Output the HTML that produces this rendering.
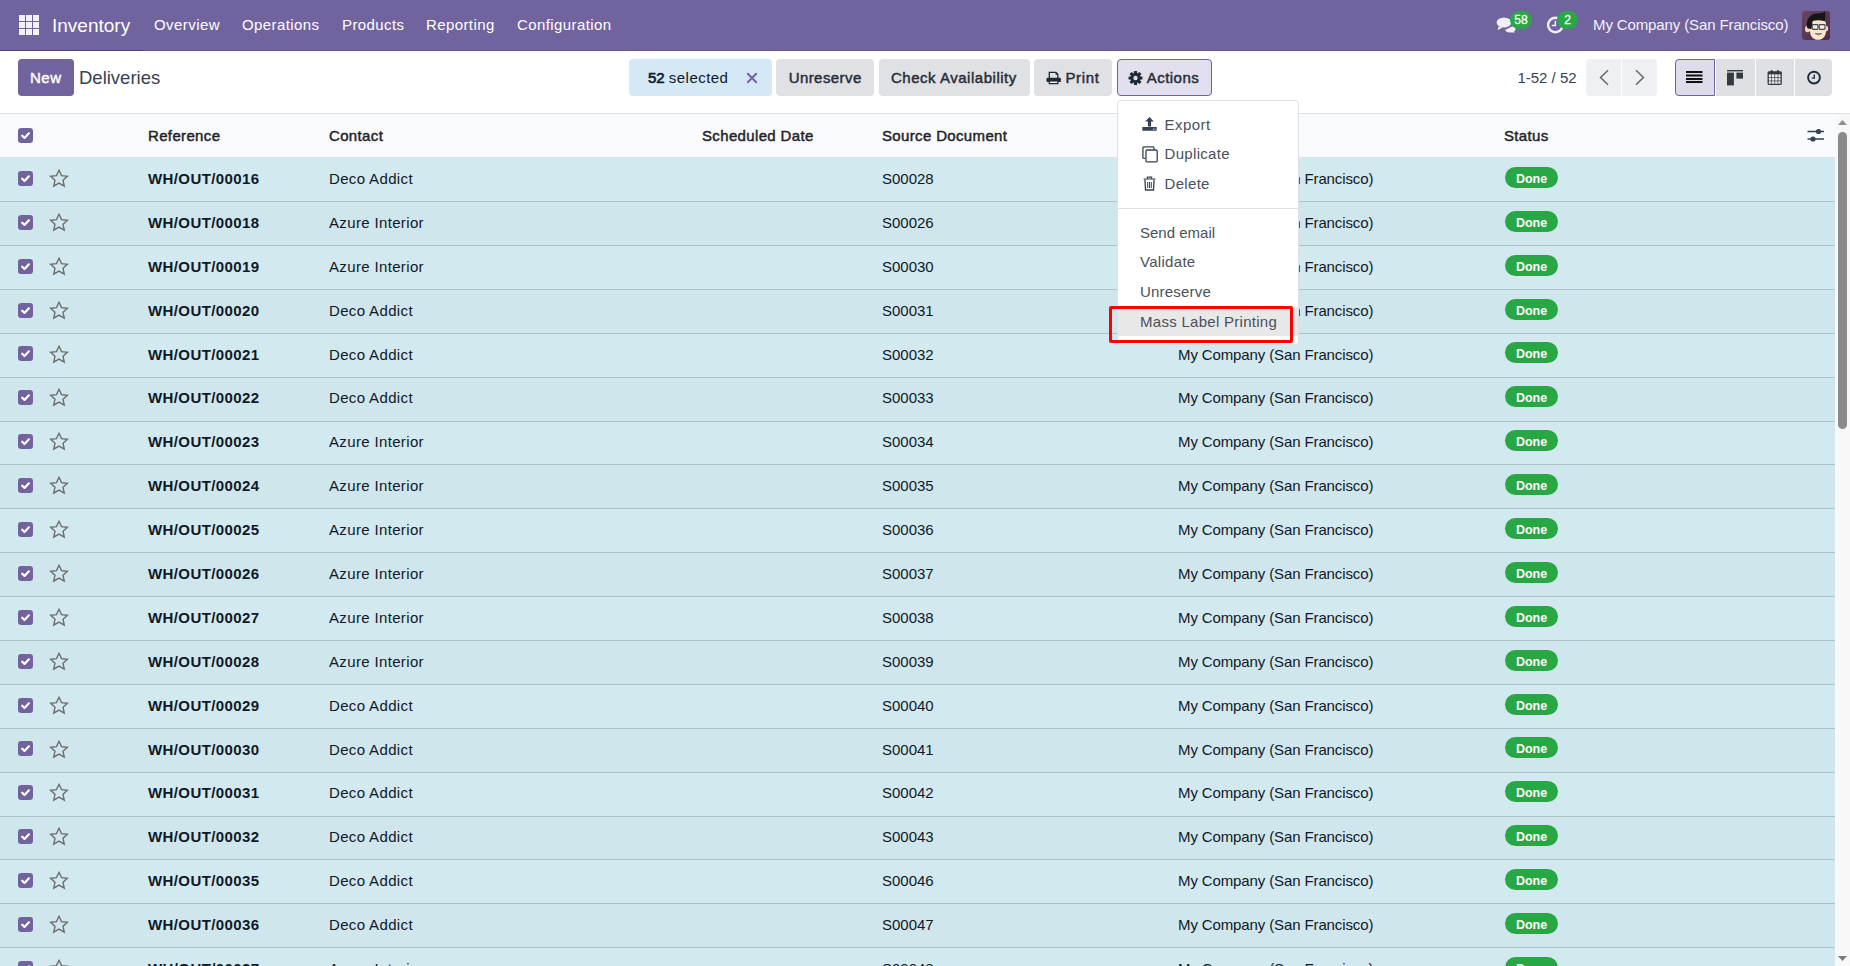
<!DOCTYPE html>
<html><head><meta charset="utf-8"><title>Deliveries</title>
<style>
*{box-sizing:border-box;margin:0;padding:0}
html,body{width:1850px;height:966px;overflow:hidden;background:#fff;font-family:"Liberation Sans",sans-serif;color:#374151}
.abs{position:absolute}
.t,.nt,.bt,.dt{position:absolute;line-height:0;white-space:nowrap;margin-top:-0.3465em}
.t{font-size:15px;color:#111827}
.b{font-weight:bold}
.hd{color:#1f2329;letter-spacing:.35px;-webkit-text-stroke:.45px #1f2329}
#nav{position:absolute;left:0;top:0;width:1850px;height:51px;background:#71639e;border-bottom:1px solid #65588f}
#nav .brandline{position:absolute;left:0;top:50px;width:143px;height:1px;background:#4f4472}
.nt{color:#fff}
.grid{position:absolute;left:19px;top:15px;width:19.5px;height:19.5px}
.grid i{position:absolute;width:6px;height:6px;background:#f3f2f8}
#cp{position:absolute;left:0;top:51px;width:1850px;height:63px;background:#fff;border-bottom:1px solid #dee2e6}
.btn{position:absolute;top:59px;height:37px;border-radius:4px;background:#dfe1e5}
.bt{font-size:15px;font-weight:normal;color:#262c36;-webkit-text-stroke:.45px currentColor}
#thead{position:absolute;left:0;top:114px;width:1835px;height:44px;background:#f9fafb;border-bottom:1px solid #dee2e6}
.row{position:absolute;left:0;width:1835px;height:43.89px;background:#d2e9ef}
.row.odd{background:#cfe7ec}
.rb{position:absolute;left:0;width:1835px;height:1px;background:#a9c3c9}
.cb{position:absolute;left:18px;width:15px;height:15px}
.cb svg,.star svg{display:block}
.star{position:absolute;left:49px;width:20px;height:19px}
.badge{position:absolute;left:1505px;width:53px;height:21px;border-radius:11px;background:#28a745;color:#fff;font-size:12.5px;font-weight:bold;text-align:center;line-height:24px}
#scroll{position:absolute;left:1835px;top:114px;width:15px;height:852px;background:#f8f8f8}
#dd{position:absolute;left:1117px;top:100px;width:182px;height:245px;background:#fff;border:1px solid #dee2e6;border-radius:4px}
.dt{font-size:15px;color:#4a5059}
</style></head><body>
<div id="nav">
  <div class="brandline"></div>
  <div class="grid"><i style="left:0.00px;top:0.00px"></i><i style="left:6.75px;top:0.00px"></i><i style="left:13.50px;top:0.00px"></i><i style="left:0.00px;top:6.75px"></i><i style="left:6.75px;top:6.75px"></i><i style="left:13.50px;top:6.75px"></i><i style="left:0.00px;top:13.50px"></i><i style="left:6.75px;top:13.50px"></i><i style="left:13.50px;top:13.50px"></i></div>
  <div class="nt" style="left:52px;top:33px;font-size:19px">Inventory</div>
  <div class="nt" style="left:154px;top:30px;font-size:15px;letter-spacing:.45px">Overview</div>
  <div class="nt" style="left:242px;top:30px;font-size:15px;letter-spacing:.4px">Operations</div>
  <div class="nt" style="left:342px;top:30px;font-size:15px;letter-spacing:.4px">Products</div>
  <div class="nt" style="left:426px;top:30px;font-size:15px;letter-spacing:.4px">Reporting</div>
  <div class="nt" style="left:517px;top:30px;font-size:15px;letter-spacing:.4px">Configuration</div>
  <div class="nt" style="left:1593px;top:30.4px;font-size:15px;letter-spacing:-.12px;color:#f4f2f8">My Company (San Francisco)</div>
</div>

<svg class="abs" style="left:1494px;top:14px" width="26" height="22" viewBox="0 0 26 22">
 <path d="M10.5 16.2 C11.4 17.9 13.6 19.1 16.3 19.1 C17 19.1 17.6 19 18.2 18.9 L21.8 20.4 L20.6 18 C21.6 17.2 22.2 16.3 22.2 15.2 C22.2 13.7 21.2 12.5 19.6 11.7" fill="#f1eff6" stroke="#71639e" stroke-width="1.3"/>
 <ellipse cx="10" cy="8.5" rx="8" ry="5.6" fill="#f1eff6" stroke="#71639e" stroke-width="1.2"/>
 <path d="M4.6 12.4 L3.6 16.3 L8.6 13.6 Z" fill="#f1eff6"/>
</svg>
<div class="abs" style="left:1510px;top:10.8px;width:22px;height:18px;border-radius:9px;background:#28a745;color:#fff;font-size:12px;text-align:center;line-height:19px;-webkit-text-stroke:.3px #fff">58</div>
<svg class="abs" style="left:1545px;top:15px" width="20" height="20" viewBox="0 0 20 20">
 <circle cx="10.4" cy="10" r="7.3" fill="none" stroke="#f1eff6" stroke-width="2.4"/>
 <path d="M10.4 5.8 V10.4 H6.8" fill="none" stroke="#f1eff6" stroke-width="1.5"/>
</svg>
<div class="abs" style="left:1557.3px;top:10.5px;width:20.5px;height:18.5px;border-radius:9.5px;background:#28a745;color:#fff;font-size:12px;text-align:center;line-height:19px;-webkit-text-stroke:.3px #fff">2</div>
<svg class="abs" style="left:1802px;top:11px" width="28" height="29" viewBox="0 0 28 29">
 <defs><linearGradient id="avg" x1="0" y1="0" x2="1" y2="1"><stop offset="0" stop-color="#6b4562"/><stop offset="1" stop-color="#4a2b43"/></linearGradient></defs>
 <rect x="0" y="0" width="28" height="29" rx="3" fill="url(#avg)"/>
 <ellipse cx="5.6" cy="18" rx="2.6" ry="3.3" fill="#f6d9c2"/>
 <ellipse cx="24.4" cy="17.5" rx="1.8" ry="2.8" fill="#f3d3bb"/>
 <path d="M7.5 12 C7.5 9 11 8 16 8 C21 8 24 10 24 13 L24 20 C24 25.5 20.5 28.8 16 28.8 C11.5 28.8 8 25.5 8 20 Z" fill="#fce4cf"/>
 <path d="M5 16.5 C3.8 7 9 2.5 15 2.5 C19 2.5 21.2 2 22.6 0.6 C23.8 3 23.6 7 22.6 10.2 C19 9 14 9 10.6 10 L9.6 17.8 C8 18.2 6 17.8 5 16.5 Z" fill="#161616"/>
 <rect x="10.2" y="13.6" width="5.8" height="4.8" rx="0.8" fill="#eeeeee" stroke="#4a4a4a" stroke-width="1.2"/>
 <rect x="17.2" y="13.6" width="5.8" height="4.8" rx="0.8" fill="#eeeeee" stroke="#4a4a4a" stroke-width="1.2"/>
 <path d="M13.2 22.6 Q16.5 25.2 19.8 22.6 Z" fill="#e9e9e9" stroke="#7a6a66" stroke-width="0.9"/>
</svg>

<div id="cp"></div>
<div class="btn" style="left:18px;width:56px;background:#71639e"></div>
<div class="bt" style="left:30px;top:83px;color:#fff;letter-spacing:.5px">New</div>
<div class="nt" style="left:79px;top:84px;font-size:18.5px;color:#374151">Deliveries</div>

<div class="btn" style="left:629px;width:143px;background:#d4e8f6"></div>
<div class="bt" style="left:648px;top:83px;color:#111827"><span style="-webkit-text-stroke:.6px currentColor">52</span> <span style="-webkit-text-stroke:0;letter-spacing:.45px">selected</span></div>
<div class="btn" style="left:776px;width:98px"></div><div class="bt" style="left:788.7px;top:83px;letter-spacing:.42px">Unreserve</div>
<div class="btn" style="left:879px;width:151px"></div><div class="bt" style="left:891px;top:83px;letter-spacing:.52px">Check Availability</div>
<div class="btn" style="left:1034px;width:78px"></div><div class="bt" style="left:1065.4px;top:83px;letter-spacing:.7px">Print</div>
<div class="btn" style="left:1117px;width:95px;background:#e2dfee;border:1px solid #71639e"></div><div class="bt" style="left:1146.8px;top:83px;letter-spacing:.45px">Actions</div>

<div class="nt" style="left:1517.4px;top:83px;font-size:15px;color:#374151">1-52 / 52</div>
<div class="btn" style="left:1586px;width:71px;background:#eef0f3"></div>
<div class="abs" style="left:1621px;top:59px;width:1px;height:37px;background:#fff"></div>
<div class="btn" style="left:1675px;width:157px;background:#dee0e4"></div>
<div class="btn" style="left:1675px;width:40px;background:#dedbea;border:1px solid #71639e;border-radius:4px 0 0 4px"></div>
<div class="abs" style="left:1715px;top:59px;width:1px;height:37px;background:#fff"></div>
<div class="abs" style="left:1755px;top:59px;width:1px;height:37px;background:#fff"></div>
<div class="abs" style="left:1794px;top:59px;width:1px;height:37px;background:#fff"></div>

<svg class="abs" style="left:746px;top:71.5px" width="12" height="12" viewBox="0 0 12 12"><path d="M1.3 1.3 L10.7 10.7 M10.7 1.3 L1.3 10.7" stroke="#71639e" stroke-width="2"/></svg>
<svg class="abs" style="left:1045.5px;top:70.5px" width="15" height="14" viewBox="0 0 15 14">
 <path d="M3.3 6.9 V1.45 H10 L11.85 3.3 V6.9" fill="none" stroke="#1f2937" stroke-width="1.3"/>
 <path d="M9.6 1.2 L12.1 3.7 L9.6 3.7 Z" fill="#1f2937"/>
 <rect x="0.5" y="6.7" width="14.4" height="4.4" rx="1.1" fill="#1f2937"/>
 <path d="M3.3 10.6 V12.55 H11.85 V10.6" fill="#fafafa" stroke="#1f2937" stroke-width="1.3"/>
</svg>
<svg class="abs" style="left:1128px;top:70.5px" width="15" height="14" viewBox="-7.5 -7 15 14">
 <g fill="#1f2937">
  <circle r="5"/>
  <rect x="-1.6" y="-7" width="3.2" height="14" rx="0.6"/>
  <rect x="-1.6" y="-7" width="3.2" height="14" rx="0.6" transform="rotate(45)"/>
  <rect x="-1.6" y="-7" width="3.2" height="14" rx="0.6" transform="rotate(90)"/>
  <rect x="-1.6" y="-7" width="3.2" height="14" rx="0.6" transform="rotate(135)"/>
 </g>
 <circle r="2.2" fill="#e2dfee"/>
</svg>
<svg class="abs" style="left:1598px;top:69px" width="12" height="17" viewBox="0 0 12 17"><path d="M10 1.3 L2.6 8.5 L10 15.7" fill="none" stroke="#6b6b6b" stroke-width="1.6"/></svg>
<svg class="abs" style="left:1634px;top:69px" width="12" height="17" viewBox="0 0 12 17"><path d="M2 1.3 L9.4 8.5 L2 15.7" fill="none" stroke="#6b6b6b" stroke-width="1.6"/></svg>
<svg class="abs" style="left:1686px;top:70px" width="17" height="14" viewBox="0 0 17 14"><g fill="#111"><rect x="0" y="1" width="16.5" height="2"/><rect x="0" y="4.5" width="16.5" height="2"/><rect x="0" y="8" width="16.5" height="2"/><rect x="0" y="11" width="16.5" height="2"/></g></svg>
<svg class="abs" style="left:1727px;top:69.5px" width="17" height="16" viewBox="0 0 17 16"><g fill="#343a40"><rect x="0" y="0" width="16" height="1.4"/><rect x="0" y="2.6" width="6.9" height="12.8"/><rect x="9.4" y="2.6" width="6.6" height="6"/></g></svg>
<svg class="abs" style="left:1767px;top:69px" width="16" height="17" viewBox="0 0 16 17">
 <rect x="1.2" y="2.8" width="13" height="12.6" rx="1" fill="#eceef1" stroke="#343a40" stroke-width="1.3"/>
 <rect x="1.2" y="2.8" width="13" height="2.6" fill="#343a40"/>
 <rect x="3.7" y="0.9" width="1.9" height="3.2" rx="0.9" fill="#343a40"/><rect x="9.9" y="0.9" width="1.9" height="3.2" rx="0.9" fill="#343a40"/>
 <path d="M4.45 5.4 V15 M7.7 5.4 V15 M10.95 5.4 V15 M1.5 8.6 H14 M1.5 11.9 H14" stroke="#343a40" stroke-width="0.7"/>
</svg>
<svg class="abs" style="left:1806px;top:70px" width="16" height="16" viewBox="0 0 16 16"><circle cx="8" cy="7.6" r="5.9" fill="none" stroke="#1f2937" stroke-width="1.9"/><path d="M8.3 4.6 V8.2 H5.8" fill="none" stroke="#1f2937" stroke-width="1.3"/></svg>


<div id="thead"></div>
<div class="cb" style="top:128px"><svg width="15" height="15" viewBox="0 0 15 15"><rect x="0" y="0" width="15" height="15" rx="3.2" fill="#71639e"/><path d="M4.2 7.7 L6.5 9.9 L10.9 5.3" fill="none" stroke="#fff" stroke-width="2.2" stroke-linecap="round" stroke-linejoin="round"/></svg></div>
<div class="t hd" style="left:148px;top:140.7px;">Reference</div>
<div class="t hd" style="left:329px;top:140.7px;">Contact</div>
<div class="t hd" style="left:702px;top:140.7px;">Scheduled Date</div>
<div class="t hd" style="left:882px;top:140.7px;">Source Document</div>
<div class="t hd" style="left:1178px;top:140.7px;">Company</div>
<div class="t hd" style="left:1504px;top:140.7px;">Status</div>

<svg class="abs" style="left:1807px;top:128px" width="18" height="15" viewBox="0 0 18 15">
 <path d="M0.5 3.5 H17 M0.5 11 H17" stroke="#374151" stroke-width="1.3"/>
 <circle cx="11.5" cy="3.5" r="2.6" fill="#374151"/><circle cx="6" cy="11" r="2.6" fill="#374151"/>
</svg>


<div class="row" style="top:158.20px"></div><div class="rb" style="top:201px"></div><div class="cb" style="top:170.90px"><svg width="15" height="15" viewBox="0 0 15 15"><rect x="0" y="0" width="15" height="15" rx="3.2" fill="#71639e"/><path d="M4.2 7.7 L6.5 9.9 L10.9 5.3" fill="none" stroke="#fff" stroke-width="2.2" stroke-linecap="round" stroke-linejoin="round"/></svg></div><div class="star" style="top:169.00px"><svg width="20" height="19" viewBox="0 0 20 19"><path d="M10 1.3 L12.55 6.65 L18.4 7.3 L14 11.25 L15.25 17.1 L10 14.1 L4.75 17.1 L6 11.25 L1.6 7.3 L7.45 6.65 Z" fill="none" stroke="#6b6b6b" stroke-width="1.35" stroke-linejoin="miter"/></svg></div><div class="t b" style="left:148px;top:184.20px;letter-spacing:.4px">WH/OUT/00016</div><div class="t" style="left:329px;top:184.20px;letter-spacing:.35px">Deco Addict</div><div class="t" style="left:882px;top:184.20px;">S00028</div><div class="t" style="left:1178px;top:184.20px;letter-spacing:-.12px">My Company (San Francisco)</div><div class="badge" style="top:166.90px">Done</div>
<div class="row odd" style="top:202.09px"></div><div class="rb" style="top:245px"></div><div class="cb" style="top:214.79px"><svg width="15" height="15" viewBox="0 0 15 15"><rect x="0" y="0" width="15" height="15" rx="3.2" fill="#71639e"/><path d="M4.2 7.7 L6.5 9.9 L10.9 5.3" fill="none" stroke="#fff" stroke-width="2.2" stroke-linecap="round" stroke-linejoin="round"/></svg></div><div class="star" style="top:212.89px"><svg width="20" height="19" viewBox="0 0 20 19"><path d="M10 1.3 L12.55 6.65 L18.4 7.3 L14 11.25 L15.25 17.1 L10 14.1 L4.75 17.1 L6 11.25 L1.6 7.3 L7.45 6.65 Z" fill="none" stroke="#6b6b6b" stroke-width="1.35" stroke-linejoin="miter"/></svg></div><div class="t b" style="left:148px;top:228.09px;letter-spacing:.4px">WH/OUT/00018</div><div class="t" style="left:329px;top:228.09px;letter-spacing:.35px">Azure Interior</div><div class="t" style="left:882px;top:228.09px;">S00026</div><div class="t" style="left:1178px;top:228.09px;letter-spacing:-.12px">My Company (San Francisco)</div><div class="badge" style="top:210.79px">Done</div>
<div class="row" style="top:245.98px"></div><div class="rb" style="top:289px"></div><div class="cb" style="top:258.68px"><svg width="15" height="15" viewBox="0 0 15 15"><rect x="0" y="0" width="15" height="15" rx="3.2" fill="#71639e"/><path d="M4.2 7.7 L6.5 9.9 L10.9 5.3" fill="none" stroke="#fff" stroke-width="2.2" stroke-linecap="round" stroke-linejoin="round"/></svg></div><div class="star" style="top:256.78px"><svg width="20" height="19" viewBox="0 0 20 19"><path d="M10 1.3 L12.55 6.65 L18.4 7.3 L14 11.25 L15.25 17.1 L10 14.1 L4.75 17.1 L6 11.25 L1.6 7.3 L7.45 6.65 Z" fill="none" stroke="#6b6b6b" stroke-width="1.35" stroke-linejoin="miter"/></svg></div><div class="t b" style="left:148px;top:271.98px;letter-spacing:.4px">WH/OUT/00019</div><div class="t" style="left:329px;top:271.98px;letter-spacing:.35px">Azure Interior</div><div class="t" style="left:882px;top:271.98px;">S00030</div><div class="t" style="left:1178px;top:271.98px;letter-spacing:-.12px">My Company (San Francisco)</div><div class="badge" style="top:254.68px">Done</div>
<div class="row odd" style="top:289.87px"></div><div class="rb" style="top:333px"></div><div class="cb" style="top:302.57px"><svg width="15" height="15" viewBox="0 0 15 15"><rect x="0" y="0" width="15" height="15" rx="3.2" fill="#71639e"/><path d="M4.2 7.7 L6.5 9.9 L10.9 5.3" fill="none" stroke="#fff" stroke-width="2.2" stroke-linecap="round" stroke-linejoin="round"/></svg></div><div class="star" style="top:300.67px"><svg width="20" height="19" viewBox="0 0 20 19"><path d="M10 1.3 L12.55 6.65 L18.4 7.3 L14 11.25 L15.25 17.1 L10 14.1 L4.75 17.1 L6 11.25 L1.6 7.3 L7.45 6.65 Z" fill="none" stroke="#6b6b6b" stroke-width="1.35" stroke-linejoin="miter"/></svg></div><div class="t b" style="left:148px;top:315.87px;letter-spacing:.4px">WH/OUT/00020</div><div class="t" style="left:329px;top:315.87px;letter-spacing:.35px">Deco Addict</div><div class="t" style="left:882px;top:315.87px;">S00031</div><div class="t" style="left:1178px;top:315.87px;letter-spacing:-.12px">My Company (San Francisco)</div><div class="badge" style="top:298.57px">Done</div>
<div class="row" style="top:333.76px"></div><div class="rb" style="top:377px"></div><div class="cb" style="top:346.46px"><svg width="15" height="15" viewBox="0 0 15 15"><rect x="0" y="0" width="15" height="15" rx="3.2" fill="#71639e"/><path d="M4.2 7.7 L6.5 9.9 L10.9 5.3" fill="none" stroke="#fff" stroke-width="2.2" stroke-linecap="round" stroke-linejoin="round"/></svg></div><div class="star" style="top:344.56px"><svg width="20" height="19" viewBox="0 0 20 19"><path d="M10 1.3 L12.55 6.65 L18.4 7.3 L14 11.25 L15.25 17.1 L10 14.1 L4.75 17.1 L6 11.25 L1.6 7.3 L7.45 6.65 Z" fill="none" stroke="#6b6b6b" stroke-width="1.35" stroke-linejoin="miter"/></svg></div><div class="t b" style="left:148px;top:359.76px;letter-spacing:.4px">WH/OUT/00021</div><div class="t" style="left:329px;top:359.76px;letter-spacing:.35px">Deco Addict</div><div class="t" style="left:882px;top:359.76px;">S00032</div><div class="t" style="left:1178px;top:359.76px;letter-spacing:-.12px">My Company (San Francisco)</div><div class="badge" style="top:342.46px">Done</div>
<div class="row odd" style="top:377.65px"></div><div class="rb" style="top:421px"></div><div class="cb" style="top:390.35px"><svg width="15" height="15" viewBox="0 0 15 15"><rect x="0" y="0" width="15" height="15" rx="3.2" fill="#71639e"/><path d="M4.2 7.7 L6.5 9.9 L10.9 5.3" fill="none" stroke="#fff" stroke-width="2.2" stroke-linecap="round" stroke-linejoin="round"/></svg></div><div class="star" style="top:388.45px"><svg width="20" height="19" viewBox="0 0 20 19"><path d="M10 1.3 L12.55 6.65 L18.4 7.3 L14 11.25 L15.25 17.1 L10 14.1 L4.75 17.1 L6 11.25 L1.6 7.3 L7.45 6.65 Z" fill="none" stroke="#6b6b6b" stroke-width="1.35" stroke-linejoin="miter"/></svg></div><div class="t b" style="left:148px;top:403.65px;letter-spacing:.4px">WH/OUT/00022</div><div class="t" style="left:329px;top:403.65px;letter-spacing:.35px">Deco Addict</div><div class="t" style="left:882px;top:403.65px;">S00033</div><div class="t" style="left:1178px;top:403.65px;letter-spacing:-.12px">My Company (San Francisco)</div><div class="badge" style="top:386.35px">Done</div>
<div class="row" style="top:421.54px"></div><div class="rb" style="top:464px"></div><div class="cb" style="top:434.24px"><svg width="15" height="15" viewBox="0 0 15 15"><rect x="0" y="0" width="15" height="15" rx="3.2" fill="#71639e"/><path d="M4.2 7.7 L6.5 9.9 L10.9 5.3" fill="none" stroke="#fff" stroke-width="2.2" stroke-linecap="round" stroke-linejoin="round"/></svg></div><div class="star" style="top:432.34px"><svg width="20" height="19" viewBox="0 0 20 19"><path d="M10 1.3 L12.55 6.65 L18.4 7.3 L14 11.25 L15.25 17.1 L10 14.1 L4.75 17.1 L6 11.25 L1.6 7.3 L7.45 6.65 Z" fill="none" stroke="#6b6b6b" stroke-width="1.35" stroke-linejoin="miter"/></svg></div><div class="t b" style="left:148px;top:447.54px;letter-spacing:.4px">WH/OUT/00023</div><div class="t" style="left:329px;top:447.54px;letter-spacing:.35px">Azure Interior</div><div class="t" style="left:882px;top:447.54px;">S00034</div><div class="t" style="left:1178px;top:447.54px;letter-spacing:-.12px">My Company (San Francisco)</div><div class="badge" style="top:430.24px">Done</div>
<div class="row odd" style="top:465.43px"></div><div class="rb" style="top:508px"></div><div class="cb" style="top:478.13px"><svg width="15" height="15" viewBox="0 0 15 15"><rect x="0" y="0" width="15" height="15" rx="3.2" fill="#71639e"/><path d="M4.2 7.7 L6.5 9.9 L10.9 5.3" fill="none" stroke="#fff" stroke-width="2.2" stroke-linecap="round" stroke-linejoin="round"/></svg></div><div class="star" style="top:476.23px"><svg width="20" height="19" viewBox="0 0 20 19"><path d="M10 1.3 L12.55 6.65 L18.4 7.3 L14 11.25 L15.25 17.1 L10 14.1 L4.75 17.1 L6 11.25 L1.6 7.3 L7.45 6.65 Z" fill="none" stroke="#6b6b6b" stroke-width="1.35" stroke-linejoin="miter"/></svg></div><div class="t b" style="left:148px;top:491.43px;letter-spacing:.4px">WH/OUT/00024</div><div class="t" style="left:329px;top:491.43px;letter-spacing:.35px">Azure Interior</div><div class="t" style="left:882px;top:491.43px;">S00035</div><div class="t" style="left:1178px;top:491.43px;letter-spacing:-.12px">My Company (San Francisco)</div><div class="badge" style="top:474.13px">Done</div>
<div class="row" style="top:509.32px"></div><div class="rb" style="top:552px"></div><div class="cb" style="top:522.02px"><svg width="15" height="15" viewBox="0 0 15 15"><rect x="0" y="0" width="15" height="15" rx="3.2" fill="#71639e"/><path d="M4.2 7.7 L6.5 9.9 L10.9 5.3" fill="none" stroke="#fff" stroke-width="2.2" stroke-linecap="round" stroke-linejoin="round"/></svg></div><div class="star" style="top:520.12px"><svg width="20" height="19" viewBox="0 0 20 19"><path d="M10 1.3 L12.55 6.65 L18.4 7.3 L14 11.25 L15.25 17.1 L10 14.1 L4.75 17.1 L6 11.25 L1.6 7.3 L7.45 6.65 Z" fill="none" stroke="#6b6b6b" stroke-width="1.35" stroke-linejoin="miter"/></svg></div><div class="t b" style="left:148px;top:535.32px;letter-spacing:.4px">WH/OUT/00025</div><div class="t" style="left:329px;top:535.32px;letter-spacing:.35px">Azure Interior</div><div class="t" style="left:882px;top:535.32px;">S00036</div><div class="t" style="left:1178px;top:535.32px;letter-spacing:-.12px">My Company (San Francisco)</div><div class="badge" style="top:518.02px">Done</div>
<div class="row odd" style="top:553.21px"></div><div class="rb" style="top:596px"></div><div class="cb" style="top:565.91px"><svg width="15" height="15" viewBox="0 0 15 15"><rect x="0" y="0" width="15" height="15" rx="3.2" fill="#71639e"/><path d="M4.2 7.7 L6.5 9.9 L10.9 5.3" fill="none" stroke="#fff" stroke-width="2.2" stroke-linecap="round" stroke-linejoin="round"/></svg></div><div class="star" style="top:564.01px"><svg width="20" height="19" viewBox="0 0 20 19"><path d="M10 1.3 L12.55 6.65 L18.4 7.3 L14 11.25 L15.25 17.1 L10 14.1 L4.75 17.1 L6 11.25 L1.6 7.3 L7.45 6.65 Z" fill="none" stroke="#6b6b6b" stroke-width="1.35" stroke-linejoin="miter"/></svg></div><div class="t b" style="left:148px;top:579.21px;letter-spacing:.4px">WH/OUT/00026</div><div class="t" style="left:329px;top:579.21px;letter-spacing:.35px">Azure Interior</div><div class="t" style="left:882px;top:579.21px;">S00037</div><div class="t" style="left:1178px;top:579.21px;letter-spacing:-.12px">My Company (San Francisco)</div><div class="badge" style="top:561.91px">Done</div>
<div class="row" style="top:597.10px"></div><div class="rb" style="top:640px"></div><div class="cb" style="top:609.80px"><svg width="15" height="15" viewBox="0 0 15 15"><rect x="0" y="0" width="15" height="15" rx="3.2" fill="#71639e"/><path d="M4.2 7.7 L6.5 9.9 L10.9 5.3" fill="none" stroke="#fff" stroke-width="2.2" stroke-linecap="round" stroke-linejoin="round"/></svg></div><div class="star" style="top:607.90px"><svg width="20" height="19" viewBox="0 0 20 19"><path d="M10 1.3 L12.55 6.65 L18.4 7.3 L14 11.25 L15.25 17.1 L10 14.1 L4.75 17.1 L6 11.25 L1.6 7.3 L7.45 6.65 Z" fill="none" stroke="#6b6b6b" stroke-width="1.35" stroke-linejoin="miter"/></svg></div><div class="t b" style="left:148px;top:623.10px;letter-spacing:.4px">WH/OUT/00027</div><div class="t" style="left:329px;top:623.10px;letter-spacing:.35px">Azure Interior</div><div class="t" style="left:882px;top:623.10px;">S00038</div><div class="t" style="left:1178px;top:623.10px;letter-spacing:-.12px">My Company (San Francisco)</div><div class="badge" style="top:605.80px">Done</div>
<div class="row odd" style="top:640.99px"></div><div class="rb" style="top:684px"></div><div class="cb" style="top:653.69px"><svg width="15" height="15" viewBox="0 0 15 15"><rect x="0" y="0" width="15" height="15" rx="3.2" fill="#71639e"/><path d="M4.2 7.7 L6.5 9.9 L10.9 5.3" fill="none" stroke="#fff" stroke-width="2.2" stroke-linecap="round" stroke-linejoin="round"/></svg></div><div class="star" style="top:651.79px"><svg width="20" height="19" viewBox="0 0 20 19"><path d="M10 1.3 L12.55 6.65 L18.4 7.3 L14 11.25 L15.25 17.1 L10 14.1 L4.75 17.1 L6 11.25 L1.6 7.3 L7.45 6.65 Z" fill="none" stroke="#6b6b6b" stroke-width="1.35" stroke-linejoin="miter"/></svg></div><div class="t b" style="left:148px;top:666.99px;letter-spacing:.4px">WH/OUT/00028</div><div class="t" style="left:329px;top:666.99px;letter-spacing:.35px">Azure Interior</div><div class="t" style="left:882px;top:666.99px;">S00039</div><div class="t" style="left:1178px;top:666.99px;letter-spacing:-.12px">My Company (San Francisco)</div><div class="badge" style="top:649.69px">Done</div>
<div class="row" style="top:684.88px"></div><div class="rb" style="top:728px"></div><div class="cb" style="top:697.58px"><svg width="15" height="15" viewBox="0 0 15 15"><rect x="0" y="0" width="15" height="15" rx="3.2" fill="#71639e"/><path d="M4.2 7.7 L6.5 9.9 L10.9 5.3" fill="none" stroke="#fff" stroke-width="2.2" stroke-linecap="round" stroke-linejoin="round"/></svg></div><div class="star" style="top:695.68px"><svg width="20" height="19" viewBox="0 0 20 19"><path d="M10 1.3 L12.55 6.65 L18.4 7.3 L14 11.25 L15.25 17.1 L10 14.1 L4.75 17.1 L6 11.25 L1.6 7.3 L7.45 6.65 Z" fill="none" stroke="#6b6b6b" stroke-width="1.35" stroke-linejoin="miter"/></svg></div><div class="t b" style="left:148px;top:710.88px;letter-spacing:.4px">WH/OUT/00029</div><div class="t" style="left:329px;top:710.88px;letter-spacing:.35px">Deco Addict</div><div class="t" style="left:882px;top:710.88px;">S00040</div><div class="t" style="left:1178px;top:710.88px;letter-spacing:-.12px">My Company (San Francisco)</div><div class="badge" style="top:693.58px">Done</div>
<div class="row odd" style="top:728.77px"></div><div class="rb" style="top:772px"></div><div class="cb" style="top:741.47px"><svg width="15" height="15" viewBox="0 0 15 15"><rect x="0" y="0" width="15" height="15" rx="3.2" fill="#71639e"/><path d="M4.2 7.7 L6.5 9.9 L10.9 5.3" fill="none" stroke="#fff" stroke-width="2.2" stroke-linecap="round" stroke-linejoin="round"/></svg></div><div class="star" style="top:739.57px"><svg width="20" height="19" viewBox="0 0 20 19"><path d="M10 1.3 L12.55 6.65 L18.4 7.3 L14 11.25 L15.25 17.1 L10 14.1 L4.75 17.1 L6 11.25 L1.6 7.3 L7.45 6.65 Z" fill="none" stroke="#6b6b6b" stroke-width="1.35" stroke-linejoin="miter"/></svg></div><div class="t b" style="left:148px;top:754.77px;letter-spacing:.4px">WH/OUT/00030</div><div class="t" style="left:329px;top:754.77px;letter-spacing:.35px">Deco Addict</div><div class="t" style="left:882px;top:754.77px;">S00041</div><div class="t" style="left:1178px;top:754.77px;letter-spacing:-.12px">My Company (San Francisco)</div><div class="badge" style="top:737.47px">Done</div>
<div class="row" style="top:772.66px"></div><div class="rb" style="top:816px"></div><div class="cb" style="top:785.36px"><svg width="15" height="15" viewBox="0 0 15 15"><rect x="0" y="0" width="15" height="15" rx="3.2" fill="#71639e"/><path d="M4.2 7.7 L6.5 9.9 L10.9 5.3" fill="none" stroke="#fff" stroke-width="2.2" stroke-linecap="round" stroke-linejoin="round"/></svg></div><div class="star" style="top:783.46px"><svg width="20" height="19" viewBox="0 0 20 19"><path d="M10 1.3 L12.55 6.65 L18.4 7.3 L14 11.25 L15.25 17.1 L10 14.1 L4.75 17.1 L6 11.25 L1.6 7.3 L7.45 6.65 Z" fill="none" stroke="#6b6b6b" stroke-width="1.35" stroke-linejoin="miter"/></svg></div><div class="t b" style="left:148px;top:798.66px;letter-spacing:.4px">WH/OUT/00031</div><div class="t" style="left:329px;top:798.66px;letter-spacing:.35px">Deco Addict</div><div class="t" style="left:882px;top:798.66px;">S00042</div><div class="t" style="left:1178px;top:798.66px;letter-spacing:-.12px">My Company (San Francisco)</div><div class="badge" style="top:781.36px">Done</div>
<div class="row odd" style="top:816.55px"></div><div class="rb" style="top:859px"></div><div class="cb" style="top:829.25px"><svg width="15" height="15" viewBox="0 0 15 15"><rect x="0" y="0" width="15" height="15" rx="3.2" fill="#71639e"/><path d="M4.2 7.7 L6.5 9.9 L10.9 5.3" fill="none" stroke="#fff" stroke-width="2.2" stroke-linecap="round" stroke-linejoin="round"/></svg></div><div class="star" style="top:827.35px"><svg width="20" height="19" viewBox="0 0 20 19"><path d="M10 1.3 L12.55 6.65 L18.4 7.3 L14 11.25 L15.25 17.1 L10 14.1 L4.75 17.1 L6 11.25 L1.6 7.3 L7.45 6.65 Z" fill="none" stroke="#6b6b6b" stroke-width="1.35" stroke-linejoin="miter"/></svg></div><div class="t b" style="left:148px;top:842.55px;letter-spacing:.4px">WH/OUT/00032</div><div class="t" style="left:329px;top:842.55px;letter-spacing:.35px">Deco Addict</div><div class="t" style="left:882px;top:842.55px;">S00043</div><div class="t" style="left:1178px;top:842.55px;letter-spacing:-.12px">My Company (San Francisco)</div><div class="badge" style="top:825.25px">Done</div>
<div class="row" style="top:860.44px"></div><div class="rb" style="top:903px"></div><div class="cb" style="top:873.14px"><svg width="15" height="15" viewBox="0 0 15 15"><rect x="0" y="0" width="15" height="15" rx="3.2" fill="#71639e"/><path d="M4.2 7.7 L6.5 9.9 L10.9 5.3" fill="none" stroke="#fff" stroke-width="2.2" stroke-linecap="round" stroke-linejoin="round"/></svg></div><div class="star" style="top:871.24px"><svg width="20" height="19" viewBox="0 0 20 19"><path d="M10 1.3 L12.55 6.65 L18.4 7.3 L14 11.25 L15.25 17.1 L10 14.1 L4.75 17.1 L6 11.25 L1.6 7.3 L7.45 6.65 Z" fill="none" stroke="#6b6b6b" stroke-width="1.35" stroke-linejoin="miter"/></svg></div><div class="t b" style="left:148px;top:886.44px;letter-spacing:.4px">WH/OUT/00035</div><div class="t" style="left:329px;top:886.44px;letter-spacing:.35px">Deco Addict</div><div class="t" style="left:882px;top:886.44px;">S00046</div><div class="t" style="left:1178px;top:886.44px;letter-spacing:-.12px">My Company (San Francisco)</div><div class="badge" style="top:869.14px">Done</div>
<div class="row odd" style="top:904.33px"></div><div class="rb" style="top:947px"></div><div class="cb" style="top:917.03px"><svg width="15" height="15" viewBox="0 0 15 15"><rect x="0" y="0" width="15" height="15" rx="3.2" fill="#71639e"/><path d="M4.2 7.7 L6.5 9.9 L10.9 5.3" fill="none" stroke="#fff" stroke-width="2.2" stroke-linecap="round" stroke-linejoin="round"/></svg></div><div class="star" style="top:915.13px"><svg width="20" height="19" viewBox="0 0 20 19"><path d="M10 1.3 L12.55 6.65 L18.4 7.3 L14 11.25 L15.25 17.1 L10 14.1 L4.75 17.1 L6 11.25 L1.6 7.3 L7.45 6.65 Z" fill="none" stroke="#6b6b6b" stroke-width="1.35" stroke-linejoin="miter"/></svg></div><div class="t b" style="left:148px;top:930.33px;letter-spacing:.4px">WH/OUT/00036</div><div class="t" style="left:329px;top:930.33px;letter-spacing:.35px">Deco Addict</div><div class="t" style="left:882px;top:930.33px;">S00047</div><div class="t" style="left:1178px;top:930.33px;letter-spacing:-.12px">My Company (San Francisco)</div><div class="badge" style="top:913.03px">Done</div>
<div class="row" style="top:948.22px"></div><div class="rb" style="top:991px"></div><div class="cb" style="top:960.92px"><svg width="15" height="15" viewBox="0 0 15 15"><rect x="0" y="0" width="15" height="15" rx="3.2" fill="#71639e"/><path d="M4.2 7.7 L6.5 9.9 L10.9 5.3" fill="none" stroke="#fff" stroke-width="2.2" stroke-linecap="round" stroke-linejoin="round"/></svg></div><div class="star" style="top:959.02px"><svg width="20" height="19" viewBox="0 0 20 19"><path d="M10 1.3 L12.55 6.65 L18.4 7.3 L14 11.25 L15.25 17.1 L10 14.1 L4.75 17.1 L6 11.25 L1.6 7.3 L7.45 6.65 Z" fill="none" stroke="#6b6b6b" stroke-width="1.35" stroke-linejoin="miter"/></svg></div><div class="t b" style="left:148px;top:974.22px;letter-spacing:.4px">WH/OUT/00037</div><div class="t" style="left:329px;top:974.22px;letter-spacing:.35px">Azure Interior</div><div class="t" style="left:882px;top:974.22px;">S00048</div><div class="t" style="left:1178px;top:974.22px;letter-spacing:-.12px">My Company (San Francisco)</div><div class="badge" style="top:956.92px">Done</div>


<div id="scroll"></div>
<svg class="abs" style="left:1837px;top:119px" width="11" height="7" viewBox="0 0 11 7"><path d="M1 6 L5.5 1 L10 6 Z" fill="#8f8f8f"/></svg>
<div class="abs" style="left:1838px;top:132px;width:9px;height:297px;border-radius:4.5px;background:#8a8a8a"></div>
<svg class="abs" style="left:1837px;top:955px" width="11" height="7" viewBox="0 0 11 7"><path d="M1 1 L5.5 6 L10 1 Z" fill="#7a7a7a"/></svg>

<div id="dd"></div>

<svg class="abs" style="left:1142px;top:117px" width="15" height="14" viewBox="0 0 15 14">
 <path d="M7.5 0 L11.8 4.4 H9.1 V9.6 H5.9 V4.4 H3.2 Z" fill="#374151"/>
 <rect x="0.3" y="10" width="14.4" height="3.8" rx="0.6" fill="#374151"/>
 <rect x="11" y="11.7" width="1" height="0.9" fill="#fff"/><rect x="12.5" y="11.7" width="1" height="0.9" fill="#fff"/>
</svg>
<svg class="abs" style="left:1141.5px;top:146px" width="16" height="17" viewBox="0 0 16 17">
 <path d="M3 12.3 H1.9 C1.3 12.3 0.9 11.9 0.9 11.3 V1.9 C0.9 1.3 1.3 0.9 1.9 0.9 H11 C11.6 0.9 12 1.3 12 1.9 V3.5" fill="none" stroke="#374151" stroke-width="1.3"/>
 <rect x="4" y="4" width="11.2" height="11.9" rx="1.2" fill="none" stroke="#374151" stroke-width="1.3"/>
</svg>
<svg class="abs" style="left:1143px;top:176px" width="13" height="15" viewBox="0 0 13 15">
 <path d="M0.6 3 H12.4 M4.4 3 V1.2 H8.6 V3" fill="none" stroke="#374151" stroke-width="1.2"/>
 <path d="M1.9 3.4 L2.5 14 H10.5 L11.1 3.4" fill="none" stroke="#374151" stroke-width="1.3"/>
 <path d="M4.7 6 V12 M6.5 6 V12 M8.3 6 V12" stroke="#374151" stroke-width="1"/>
</svg>

<div class="dt" style="left:1164.6px;top:130.4px;letter-spacing:.45px">Export</div>
<div class="dt" style="left:1164.6px;top:159.6px;letter-spacing:.3px">Duplicate</div>
<div class="dt" style="left:1164.6px;top:189.6px;letter-spacing:.3px">Delete</div>
<div class="abs" style="left:1118px;top:208px;width:180px;height:1px;background:#dee2e6"></div>
<div class="dt" style="left:1140px;top:238.2px;">Send email</div>
<div class="dt" style="left:1140px;top:267.5px;letter-spacing:.3px">Validate</div>
<div class="dt" style="left:1140px;top:297.3px;letter-spacing:.2px">Unreserve</div>
<div class="abs" style="left:1118px;top:307px;width:180px;height:29px;background:#e8e8e9"></div>
<div class="dt" style="left:1140px;top:327.3px;letter-spacing:.28px">Mass Label Printing</div>
<div class="abs" style="left:1109px;top:306px;width:184px;height:37px;border:3px solid #ff0000;border-radius:2px"></div>
</body></html>
